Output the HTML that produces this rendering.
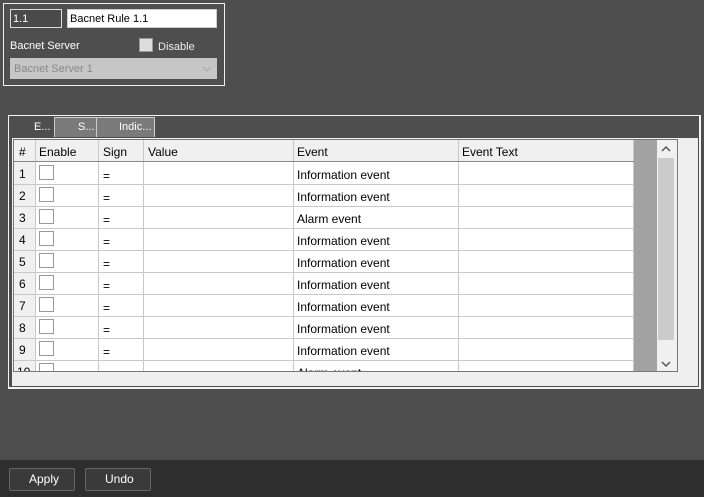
<!DOCTYPE html><html><head><style>
*{box-sizing:border-box;margin:0;padding:0}
body{width:704px;height:497px;background:#4e4e4e;position:relative;overflow:hidden;font-family:"Liberation Sans",sans-serif;font-size:12px}
.a{position:absolute}
.t{position:absolute;white-space:nowrap;line-height:14px}
</style></head><body>
<div class="a" style="left:3px;top:3px;width:222px;height:83px;border:1px solid #eee"></div>
<div class="a" style="left:10px;top:9px;width:52px;height:19px;border:1px solid #ddd;background:#4a4a4a"></div>
<div class="t" style="left:13px;top:12px;color:#fff;font-size:11px">1.1</div>
<div class="a" style="left:67px;top:9px;width:150px;height:19px;background:#fff;border:1px solid #ccc"></div>
<div class="t" style="left:70px;top:12px;color:#000;font-size:11px">Bacnet Rule 1.1</div>
<div class="t" style="left:10px;top:39px;color:#fff;font-size:11px">Bacnet Server</div>
<div class="a" style="left:139px;top:38px;width:14px;height:14px;background:#ddd;border:1px solid #999"></div>
<div class="t" style="left:158px;top:40px;color:#eee;font-size:11px">Disable</div>
<div class="a" style="left:10px;top:58px;width:207px;height:21px;background:#c6c6c6"></div>
<div class="t" style="left:14px;top:62px;color:#888;font-size:11px">Bacnet Server 1</div>
<svg class="a" style="left:202px;top:66px" width="10" height="6"><path d="M1 1l4 4 4-4" stroke="#aaa" fill="none"/></svg>

<div class="a" style="left:8px;top:115px;width:693px;height:274px;border:1px solid #f4f4f4;border-right-width:2px;border-bottom-width:2px"></div>
<div class="a" style="left:10px;top:117px;width:689px;height:270px;background:#4e4e4e"></div>
<div class="t" style="left:34px;top:120px;color:#fff;font-size:11px">E...</div>
<div class="a" style="left:54px;top:117px;width:43px;height:20px;background:#7a7a7a;border:1px solid #ccc;border-bottom:none"></div>
<div class="t" style="left:78px;top:120px;color:#fff;font-size:11px">S...</div>
<div class="a" style="left:96px;top:117px;width:59px;height:20px;background:#7a7a7a;border:1px solid #ccc;border-bottom:none"></div>
<div class="t" style="left:119px;top:120px;color:#fff;font-size:11px">Indic...</div>
<div class="a" style="left:12px;top:138px;width:686px;height:248px;background:#efefef"></div>
<div class="a" style="left:13px;top:139px;width:665px;height:233px;border:1px solid #777;background:#a2a2a2;overflow:hidden">
<svg width="665" height="231" style="position:absolute;left:0;top:0">
<rect x="0" y="0" width="620" height="231" fill="#fff"/>
<rect x="0" y="0" width="620" height="22" fill="#f0f0f0"/>
<rect x="0" y="22" width="21" height="209" fill="#f0f0f0"/>
<g stroke="#c8c8c8"><line x1="0" x2="620" y1="44.5" y2="44.5"/><line x1="0" x2="620" y1="66.5" y2="66.5"/><line x1="0" x2="620" y1="88.5" y2="88.5"/><line x1="0" x2="620" y1="110.5" y2="110.5"/><line x1="0" x2="620" y1="132.5" y2="132.5"/><line x1="0" x2="620" y1="154.5" y2="154.5"/><line x1="0" x2="620" y1="176.5" y2="176.5"/><line x1="0" x2="620" y1="198.5" y2="198.5"/><line x1="0" x2="620" y1="220.5" y2="220.5"/>
<line x1="21.5" x2="21.5" y1="0" y2="231"/><line x1="84.5" x2="84.5" y1="0" y2="231"/><line x1="129.5" x2="129.5" y1="0" y2="231"/><line x1="279.5" x2="279.5" y1="0" y2="231"/><line x1="444.5" x2="444.5" y1="0" y2="231"/><line x1="619.5" x2="619.5" y1="0" y2="231"/></g>
<line x1="0" x2="620" y1="21.5" y2="21.5" stroke="#888"/>
<rect x="643" y="0" width="22" height="231" fill="#f0f0f0"/>
<rect x="644" y="18" width="16" height="182" fill="#cbcbcb"/>
<path d="M648 11l4-4 4 4M648 222l4 4 4-4" stroke="#555" stroke-width="1.5" fill="none"/>
<g fill="#fff" stroke="#999"><rect x="25.5" y="25.5" width="14" height="14"/><rect x="25.5" y="47.5" width="14" height="14"/><rect x="25.5" y="69.5" width="14" height="14"/><rect x="25.5" y="91.5" width="14" height="14"/><rect x="25.5" y="113.5" width="14" height="14"/><rect x="25.5" y="135.5" width="14" height="14"/><rect x="25.5" y="157.5" width="14" height="14"/><rect x="25.5" y="179.5" width="14" height="14"/><rect x="25.5" y="201.5" width="14" height="14"/><rect x="25.5" y="223.5" width="14" height="14"/></g>
<g font-family="Liberation Sans" font-size="12" fill="#000">
<text x="5" y="16">#</text><text x="25" y="16">Enable</text><text x="89" y="16">Sign</text><text x="134" y="16">Value</text><text x="283" y="16">Event</text><text x="448" y="16">Event Text</text>
<text x="5" y="38">1</text><text x="5" y="60">2</text><text x="5" y="82">3</text><text x="5" y="104">4</text><text x="5" y="126">5</text><text x="5" y="148">6</text><text x="5" y="170">7</text><text x="5" y="192">8</text><text x="5" y="214">9</text><text x="3" y="236">10</text>
<text x="89" y="40">=</text><text x="89" y="62">=</text><text x="89" y="84">=</text><text x="89" y="106">=</text><text x="89" y="128">=</text><text x="89" y="150">=</text><text x="89" y="172">=</text><text x="89" y="194">=</text><text x="89" y="216">=</text>
<text x="283" y="39">Information event</text><text x="283" y="61">Information event</text><text x="283" y="83">Alarm event</text><text x="283" y="105">Information event</text><text x="283" y="127">Information event</text><text x="283" y="149">Information event</text><text x="283" y="171">Information event</text><text x="283" y="193">Information event</text><text x="283" y="215">Information event</text><text x="283" y="237">Alarm event</text>
</g></svg></div>

<div class="a" style="left:0;top:460px;width:704px;height:37px;background:#2e2e2e"></div>
<div class="a" style="left:9px;top:468px;width:66px;height:23px;border:1px solid #666;background:#3a3a3a;border-radius:2px"></div>
<div class="t" style="left:29px;top:472px;color:#fff">Apply</div>
<div class="a" style="left:85px;top:468px;width:66px;height:23px;border:1px solid #666;background:#3a3a3a;border-radius:2px"></div>
<div class="t" style="left:105px;top:472px;color:#fff">Undo</div>
</body></html>
